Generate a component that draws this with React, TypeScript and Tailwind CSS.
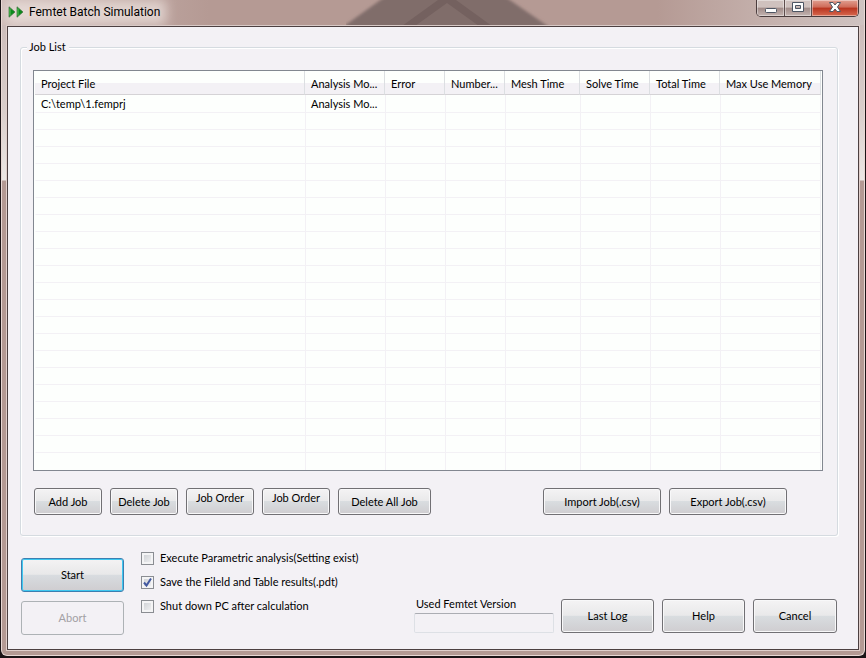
import { useState } from "react"
import type { ReactNode } from "react"

const columns = [
    { name: "Project File", width: "w-auto" },
    { name: "Analysis Mo...", width: "w-[80px]" },
    { name: "Error", width: "w-[60px]" },
    { name: "Number...", width: "w-[60px]" },
    { name: "Mesh Time", width: "w-[75px]" },
    { name: "Solve Time", width: "w-[70px]" },
    { name: "Total Time", width: "w-[70px]" },
    { name: "Max Use Memory", width: "w-[101px]" },
]

const jobs = [["C:\\temp\\1.femprj", "Analysis Mo..."]]
const emptyRows = 21

export default function App() {
    return (
        <div className="min-h-screen bg-[#1b1416] pb-px px-px font-[Lato,Arial,sans-serif] text-[11px] leading-4 text-black">
            <div className="relative rounded-b-md border-x border-b border-[#e8d8d4] bg-[linear-gradient(#c9b8b6,#d9cecb_110px,#ece7e4_180px,#b49a94_181px)]">
                <TitleBar />
                <div className="px-1 pb-1">
                    <div className="border border-[#e0cfcb] border-t-[#d8cac7]">
                        <main className="border border-[#4c4041] bg-[#f3f1f5] pl-3 pr-5 pt-3 pb-[14px]">
                            <JobList />
                            <Footer />
                        </main>
                    </div>
                </div>
            </div>
        </div>
    )
}

function TitleBar() {
    return (
        <header className="relative flex h-[25px] items-start justify-between overflow-hidden bg-[linear-gradient(90deg,#cdbab6,#b59a94_24%,#b59a94_76%,#c6b3af_90%,#cfc3c1)]">
            <svg className="absolute left-1/2 top-0 h-[25px] w-[204px] -translate-x-[87px]" viewBox="0 0 204 25" aria-hidden="true">
                <defs>
                    <filter id="soft" x="-10%" y="-10%" width="120%" height="120%">
                        <feGaussianBlur stdDeviation="1.5" />
                    </filter>
                </defs>
                <path d="M40 -4H158L206 29H-6Z" fill="#806d6a" filter="url(#soft)" />
                <path d="M56 26 92 0H110L146 26H133L101 3 69 26Z" fill="#74615f" />
            </svg>
            <div className="absolute left-1 top-0 h-[25px] w-[160px] bg-[#f0e6e2] opacity-70 blur-[6px]" />
            <div className="relative flex items-center gap-[5px] pl-[6px] pt-1">
                <svg width="16" height="12" viewBox="0 0 16 12" aria-hidden="true">
                    <path d="M1 .8 7 6 1 11.200Z" fill="#0a8a1c" stroke="#4a7a4a" strokeWidth=".8" />
                    <path d="M9 .8 15 6 9 11.200Z" fill="#0a8a1c" stroke="#4a7a4a" strokeWidth=".8" />
                    <path d="M2 2.500V9.500M10 2.500V9.500" stroke="#5fc058" />
                </svg>
                <h1 className="font-[Roboto,Arial,sans-serif] text-[12px] leading-4">Femtet Batch Simulation</h1>
            </div>
            <div className="relative mr-[5px] flex h-[17px] overflow-hidden rounded-b-[5px] border border-t-0 border-[#4b3c3d]">
                <CaptionButton label="Minimize" look="w-[28px] border-r border-[#5d4c4c] bg-[linear-gradient(#cfc1be_45%,#a08b88_50%,#c4b4b1)]">
                    <rect x="1.500" y="6.500" width="11" height="4" rx="1" />
                </CaptionButton>
                <CaptionButton label="Maximize" look="w-[27px] border-r border-[#5d4c4c] bg-[linear-gradient(#cfc1be_45%,#a08b88_50%,#c4b4b1)]">
                    <path fillRule="evenodd" d="M1.500 .5h11v9h-11ZM4.500 3.500h5v3h-5Z" />
                </CaptionButton>
                <CaptionButton label="Close" look="w-[46px] bg-[linear-gradient(#e0a092,#cf6a58_45%,#b8341f_50%,#d8694f)]">
                    <path d="M1.500 .5h3.500l2 2.500 2-2.500h3.500L9.500 5l3 4.500H9L7 7 5 9.500H1.500l3-4.500Z" />
                </CaptionButton>
            </div>
        </header>
    )
}

function CaptionButton({ label, look, children }: { label: string, look: string, children: ReactNode }) {
    return (
        <button aria-label={label} className={`flex h-full items-start justify-center pt-[2px] shadow-[inset_0_0_0_1px_rgba(255,255,255,0.4)] ${look}`}>
            <svg width="14" height="11" viewBox="0 0 14 11" fill="#fdfdfd" stroke="#4d5563">
                {children}
            </svg>
        </button>
    )
}

function JobList() {
    return (
        <fieldset className="rounded-[3px] border border-[#d5dbe0] pb-5 pl-3 pr-[14px] shadow-[inset_1px_1px_0_#fff,1px_1px_0_#fff]">
            <legend className="-ml-[6px] bg-[#f3f1f5] pl-[2px] pr-[3px]">Job List</legend>
            <div className="mt-[15px] border border-[#828790] bg-[#fdfffd] px-px">
                <table className="w-full table-fixed border-separate border-spacing-0">
                    <thead>
                        <tr>
                            {columns.map(c => (
                                <th
                                    key={c.name}
                                    className={`h-6 border-b border-r border-b-[#d5d3d6] border-r-[#dcdfe2] bg-[linear-gradient(#fdfffd_12px,#f3f1f5_12px)] p-0 pl-[6px] pt-[3px] text-left font-normal whitespace-nowrap ${c.width}`}
                                >
                                    {c.name}
                                </th>
                            ))}
                        </tr>
                    </thead>
                    <tbody>
                        {jobs.map((job, i) => (
                            <tr key={i}>
                                {columns.map((c, j) => <Cell key={c.name} height="h-[18px] pt-px" text={job[j]} />)}
                            </tr>
                        ))}
                        {Array(emptyRows).fill(null).map((_, i) => (
                            <tr key={i} className="group">
                                {columns.map(c => <Cell key={c.name} height="h-[17px]" />)}
                            </tr>
                        ))}
                    </tbody>
                </table>
            </div>
            <div className="mt-[17px] flex justify-between pl-px pr-9">
                <div className="flex gap-2">
                    <Button size="h-[27px] w-[68px]">Add Job</Button>
                    <Button size="h-[27px] w-[68px]">Delete Job</Button>
                    <Button size="h-[27px] w-[68px] pb-2">Job Order</Button>
                    <Button size="h-[27px] w-[68px] pb-2">Job Order</Button>
                    <Button size="h-[27px] w-[93px]">Delete All Job</Button>
                </div>
                <div className="flex gap-2">
                    <Button size="h-[27px] w-[118px]">Import Job(.csv)</Button>
                    <Button size="h-[27px] w-[118px]">Export Job(.csv)</Button>
                </div>
            </div>
        </fieldset>
    )
}

function Cell({ height, text }: { height: string, text?: string }) {
    return (
        <td className={`border-b border-l border-[#f3f1f5] p-0 pl-[5px] whitespace-nowrap first:border-l-[#fdfffd] last:border-r group-last:border-b-0 ${height}`}>
            {text}
        </td>
    )
}

function Footer() {
    const [options, setOptions] = useState([
        { label: "Execute Parametric analysis(Setting exist)", on: false },
        { label: "Save the Fileld and Table results(.pdt)", on: true },
        { label: "Shut down PC after calculation", on: false },
    ])

    const toggle = (index: number) => {
        setOptions(prev => prev.map((o, i) => i === index ? { ...o, on: !o.on } : o))
    }

    return (
        <div className="flex pl-px pr-px pt-[22px]">
            <div className="flex flex-col gap-[9px]">
                <button className="h-[34px] w-[103px] rounded-[3px] border border-[#3c7fb1] bg-[linear-gradient(#f4f3f4,#e8e8e9_48%,#d8dce0_50%,#cfcdd0)] shadow-[inset_0_0_0_1px_#3fc8f0]">
                    Start
                </button>
                <button disabled className="h-[34px] w-[103px] rounded-[3px] border border-[#adb2b5] bg-[#f3f1f5] text-[#a2a0a4]">
                    Abort
                </button>
            </div>
            <div className="-mt-2 ml-[17px] flex flex-col gap-2">
                {options.map((o, i) => (
                    <label key={o.label} className="flex items-center gap-[6px]">
                        <input
                            type="checkbox"
                            checked={o.on}
                            onChange={() => toggle(i)}
                            className="peer size-[13px] appearance-none border border-[#8a8d92] bg-[linear-gradient(135deg,#c9ccd0,#f6f6f7)] shadow-[inset_0_0_0_2px_#f4f4f5]"
                        />
                        <svg width="13" height="13" viewBox="0 0 13 13" className="pointer-events-none invisible -ml-[19px] peer-checked:visible" aria-hidden="true">
                            <path d="M3 6.500 5.500 9.500 10 2.500" fill="none" stroke="#4359a0" strokeWidth="2" />
                        </svg>
                        {o.label}
                    </label>
                ))}
            </div>
            <div className="ml-auto flex items-end gap-2 pb-[2px]">
                <label className="-mr-px flex flex-col">
                    <span className="pl-[2px]">Used Femtet Version</span>
                    <input readOnly className="mt-px h-[20px] w-[140px] rounded-[2px] border border-[#dde0e5] border-t-[#abadb3] bg-[#f3f1f5] px-1" />
                </label>
                <Button size="h-[34px] w-[93px]">Last Log</Button>
                <Button size="h-[34px] w-[83px]">Help</Button>
                <Button size="h-[34px] w-[84px]">Cancel</Button>
            </div>
        </div>
    )
}

function Button({ size, children }: { size: string, children: ReactNode }) {
    return (
        <button className={`rounded-[3px] border border-[#717074] bg-[linear-gradient(#f4f3f4,#e9e9ea_48%,#d9dde0_50%,#cfcdd0)] whitespace-nowrap shadow-[inset_0_0_0_1px_#f8f8f9] ${size}`}>
            {children}
        </button>
    )
}
